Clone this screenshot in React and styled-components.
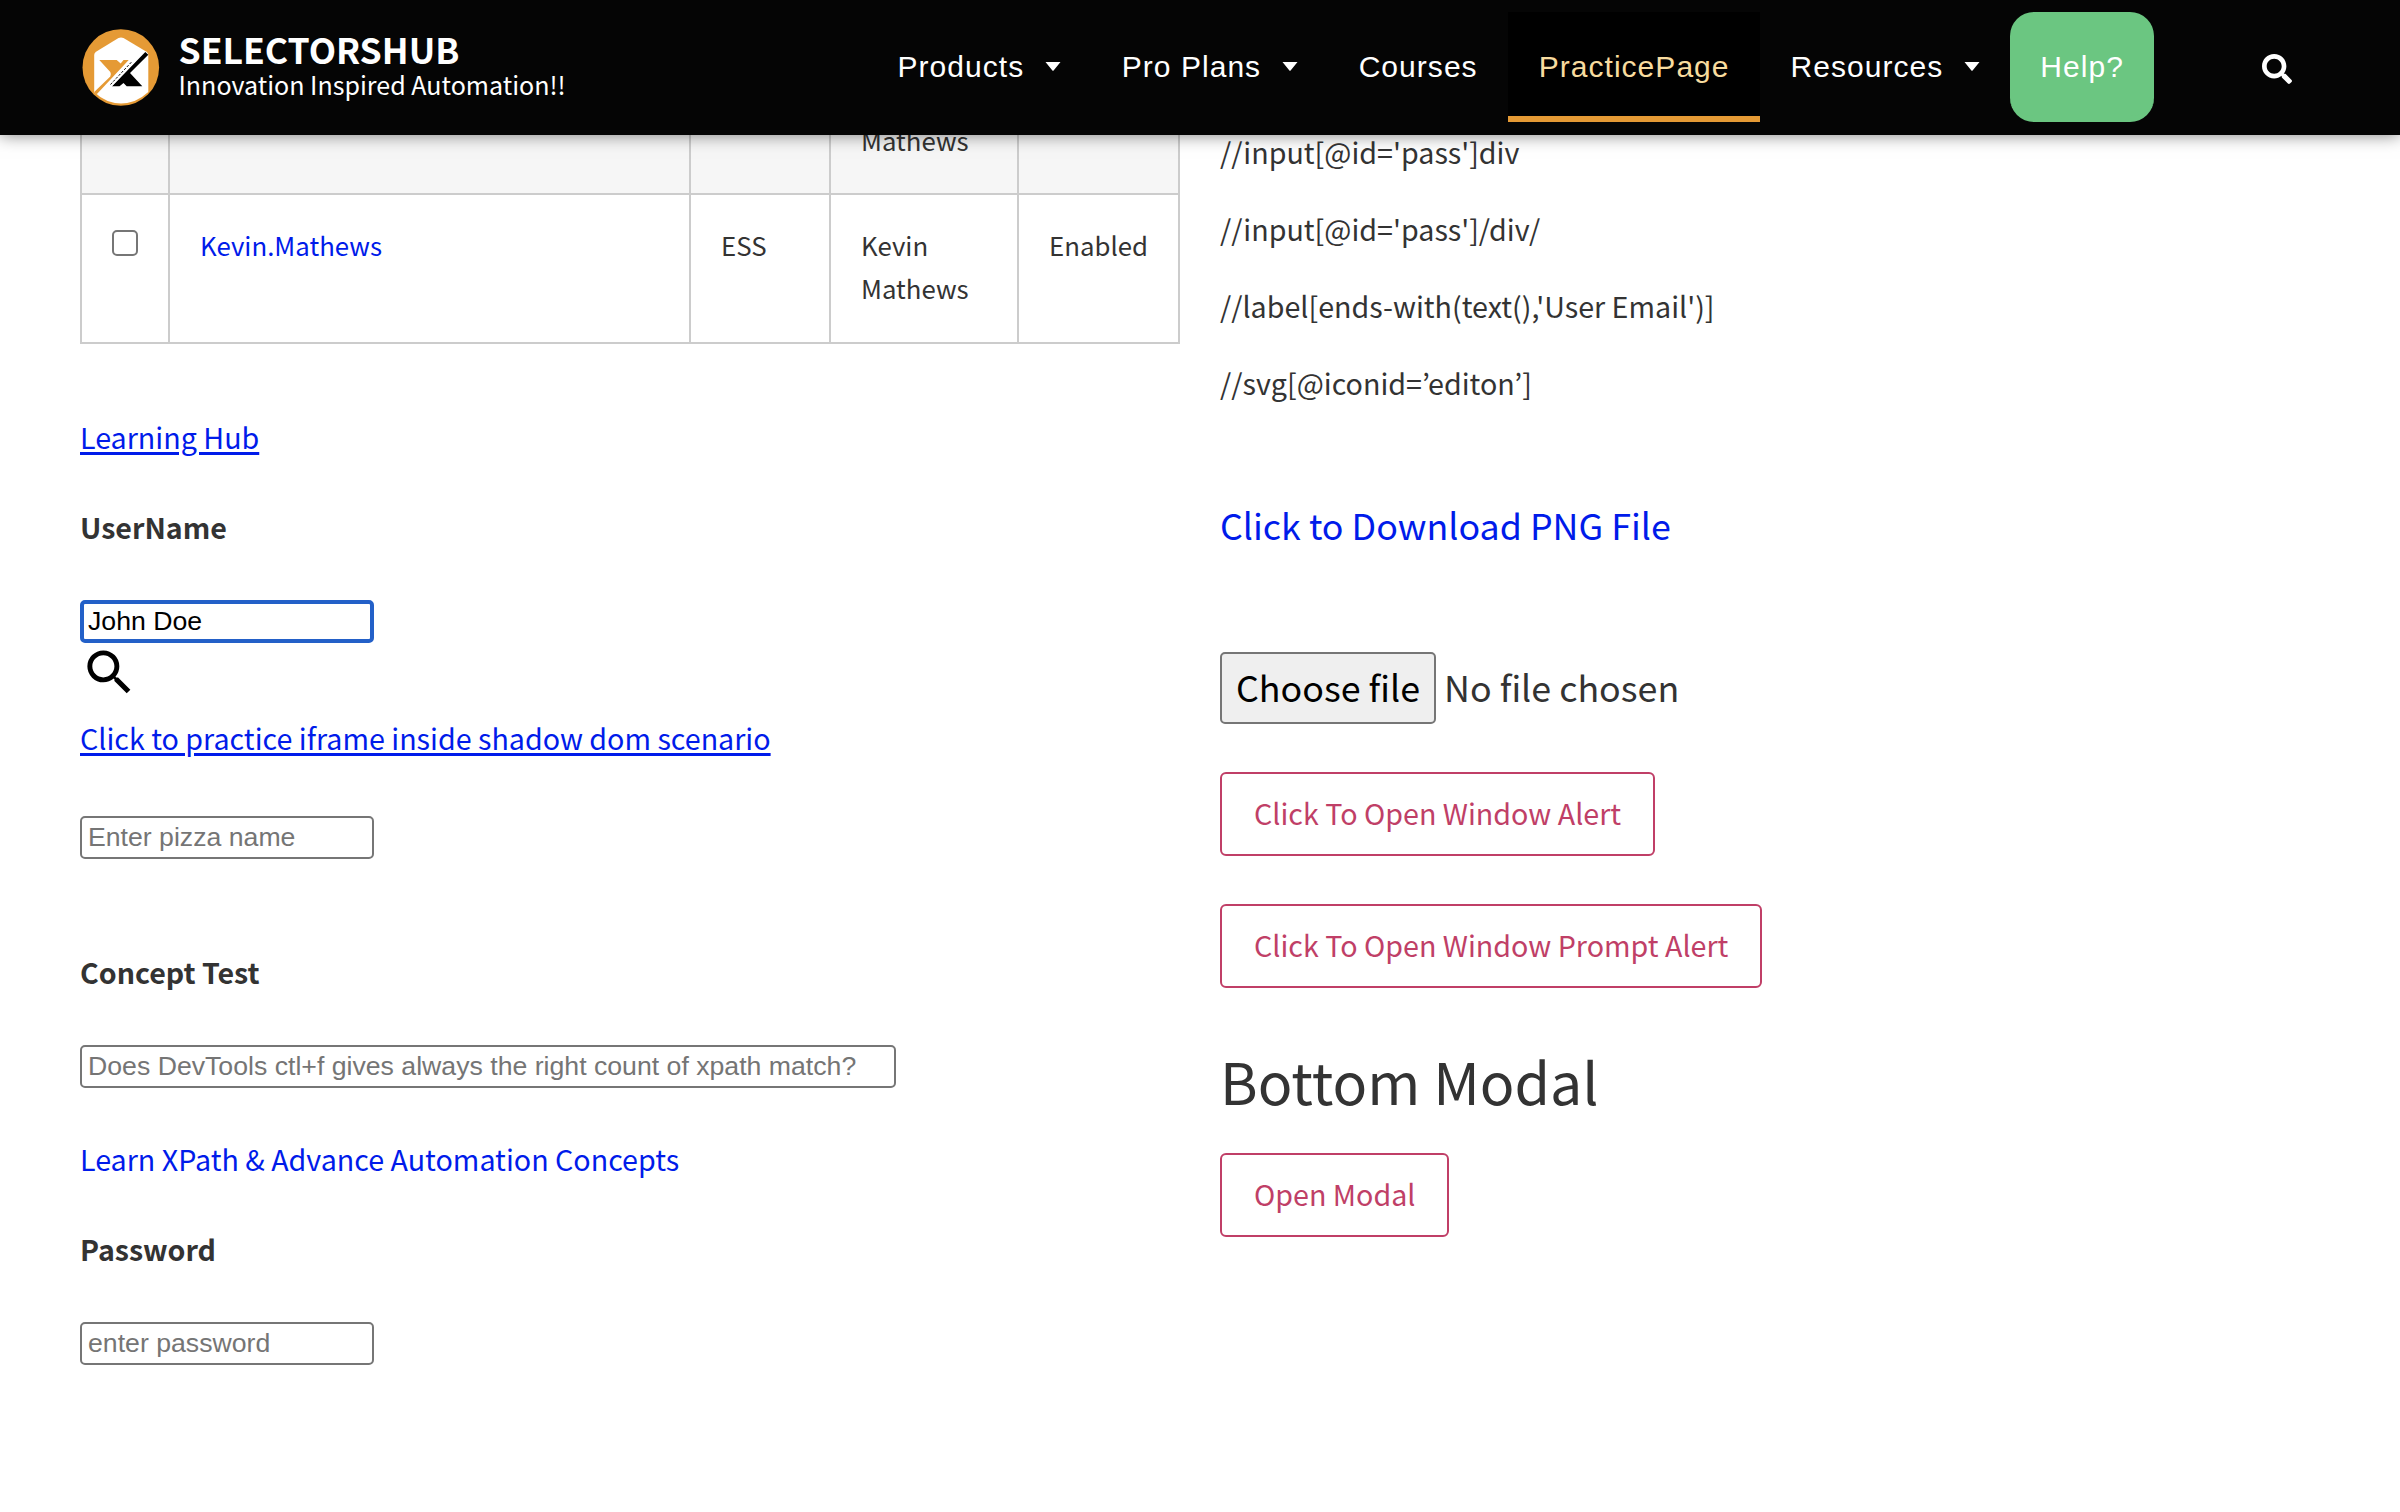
import React from "react";
import styled, { createGlobalStyle } from "styled-components";

const GlobalStyle = createGlobalStyle`
  *, *::before, *::after { box-sizing: border-box; }
  body {
    margin: 0;
    background: #fff;
    color: #333;
    font-family: "Noto Sans CJK KR", "Noto Sans", sans-serif;
  }
`;

const Page = styled.div`
  width: 2400px;
  height: 1512px;
  overflow: hidden;
`;

const Header = styled.header`
  position: relative;
  z-index: 2;
  display: flex;
  align-items: center;
  height: 135px;
  padding: 0 108px 0 82px;
  background: #050505;
  box-shadow: 0 0 16px rgba(0, 0, 0, 0.5);
`;

const Brand = styled.a`
  display: flex;
  align-items: center;
  gap: 18.5px;
  width: 785px;
  margin-bottom: 3px;
  color: #fff;
`;

const Logo = styled.svg`
  width: 78px;
  height: 78px;
  margin-top: 1px;
  flex: none;
`;

const BrandName = styled.div`
  font-size: 35.5px;
  font-weight: 700;
  line-height: 36px;
  white-space: nowrap;
`;

const Tagline = styled.div`
  font-size: 25.05px;
  line-height: 34px;
  white-space: nowrap;
`;

const Nav = styled.nav`
  display: flex;
  align-items: stretch;
  height: 110px;
  margin-bottom: 1px;
`;

const NavItem = styled.a`
  display: flex;
  align-items: center;
  gap: 20.5px;
  padding: 6px 30.5px 0;
  border-bottom: 6px solid ${(p) => (p.$active ? "#e59a35" : "transparent")};
  background: ${(p) => (p.$active ? "#000" : "transparent")};
  color: ${(p) => (p.$active ? "#f8dc9f" : "#fff")};
  font: 30px/98px "Liberation Sans", Arial, sans-serif;
  letter-spacing: 1.04px;
  white-space: nowrap;
`;

const HelpItem = styled(NavItem)`
  padding-left: 30px;
  padding-right: 30px;
  border-radius: 24px;
  border-color: #6bc681;
  background: #6bc681;
`;

const Caret = styled.svg`
  width: 16px;
  height: 9px;
  margin-top: -2px;
  fill: #fff;
`;

const SearchButton = styled.span`
  display: flex;
  margin: 2px 0 0 auto;
`;

const Main = styled.main`
  display: grid;
  grid-template-columns: 1100px 1fr;
  column-gap: 40px;
  padding-left: 80px;
`;

const Column = styled.section`
  display: flex;
  flex-direction: column;
  align-items: flex-start;
`;

const Table = styled.div`
  display: grid;
  grid-template-columns: 88px 521px 140px 188px 161px;
  grid-template-rows: 60px 149px;
  border-left: 2px solid #ccc;
  font-size: 25.8px;
  line-height: 43px;
`;

const Cell = styled.div`
  display: flex;
  align-items: ${(p) => (p.$clipped ? "flex-end" : "flex-start")};
  padding: ${(p) => (p.$clipped ? "0 30px 32px" : "28px 30px")};
  border-right: 2px solid #ccc;
  border-bottom: 2px solid #ccc;
  background: ${(p) => (p.$clipped ? "#f6f6f6" : "#fff")};
`;

const CheckBox = styled.input`
  appearance: none;
  width: 26px;
  height: 26px;
  margin: 7px 0 0;
  border: 2px solid #767676;
  border-radius: 5px;
  background: #fff;
`;

const TextLink = styled.a`
  margin-top: ${(p) => p.$gap || 0}px;
  color: #001bea;
  font-size: ${(p) => p.$size || 28.66}px;
  line-height: ${(p) => p.$line || 48}px;
  text-decoration: ${(p) => (p.$underlined ? "underline" : "none")};
  text-decoration-thickness: 2.5px;
  text-underline-offset: 3px;
  white-space: nowrap;
`;

const Label = styled.label`
  margin-top: ${(p) => p.$gap}px;
  font-size: 28.6px;
  font-weight: 700;
  line-height: 48px;
`;

const Field = styled.input`
  width: ${(p) => p.$width || 294}px;
  height: 43px;
  margin: ${(p) => p.$gap}px 0 0;
  padding: ${(p) => (p.$focused ? "0 4px" : "0 6px")};
  border: ${(p) => (p.$focused ? "4px solid #2360c8" : "2px solid #767676")};
  border-radius: 5px;
  outline: none;
  background: #fff;
  color: #000;
  font: 26.67px "Liberation Sans", Arial, sans-serif;
  &::placeholder { color: #757575; opacity: 1; }
`;

const LensIcon = styled.svg`
  width: 59px;
  height: 59px;
`;

const XPathList = styled.div`
  display: flex;
  flex-direction: column;
  gap: 29px;
  margin-top: -7px;
  font-size: 28.66px;
  line-height: 48px;
  white-space: nowrap;
`;

const FileRow = styled.div`
  display: flex;
  align-items: center;
  gap: 8px;
  margin-top: 100px;
  font-size: 35.8px;
  line-height: 64px;
  white-space: nowrap;
`;

const FileButton = styled.button`
  height: 72px;
  padding: 0 14px 4px;
  border: 2px solid #767676;
  border-radius: 5px;
  background: #efefef;
  color: #000;
  font: inherit;
`;

const FileStatus = styled.span`
  padding-bottom: 4px;
`;

const OutlineButton = styled.button`
  height: 84px;
  margin-top: ${(p) => p.$gap}px;
  padding: 0 32px 2px;
  border: 2px solid #c03f67;
  border-radius: 6px;
  background: #fff;
  color: #c03f67;
  font: 28.66px/78px "Noto Sans CJK KR", "Noto Sans", sans-serif;
  white-space: nowrap;
`;

const Heading = styled.h2`
  margin: 52px 0 0;
  font-size: 57.35px;
  font-weight: 400;
  line-height: 80px;
  white-space: nowrap;
`;

const Arrow = () => (
  <Caret viewBox="0 0 16 9">
    <path d="M0.5 0h15L8.8 8.2a1 1 0 0 1-1.6 0z" />
  </Caret>
);

const NAV = [
  { label: "Products", menu: true },
  { label: "Pro Plans", menu: true },
  { label: "Courses" },
  { label: "PracticePage", active: true },
  { label: "Resources", menu: true },
];

const XPATHS = [
  "//input[@id='pass']div",
  "//input[@id='pass']/div/",
  "//label[ends-with(text(),'User Email')]",
  "//svg[@iconid=’editon’]",
];

export default function App() {
  return (
    <Page>
      <GlobalStyle />
      <Header>
        <Brand>
          <Logo viewBox="0 0 78 78">
            <circle cx="38.8" cy="39.5" r="38.3" fill="#e59a35" />
            <path
              d="M12.2 27Q12.2 25 14 23.8L36.5 10Q39 8.800 41.500 10L64.500 23.800Q66.300 25 66.300 27V64Q54 75.400 39 75.400Q24 75.400 12.200 64Z"
              fill="#fff"
            />
            <path d="M17.300 32H34.700L38.700 35.500L41.500 32H46.700L14.700 66.300L12.200 64L28.300 48.500Q29.500 46 28.300 44Z" fill="#e59a35" />
            <path d="M30 58.300L63.300 24L66.300 26.700L48 45L60.300 58.300H44.700L41.500 55L37.500 58.300Z" fill="#000" />
            <path d="M26 59L52 32" stroke="#fff" strokeWidth="4.500" />
            <path d="M28.500 56.500L50 33.500" stroke="#111" strokeWidth="1" strokeDasharray="2.500 1.500" />
          </Logo>
          <div>
            <BrandName>SELECTORSHUB</BrandName>
            <Tagline>Innovation Inspired Automation!!</Tagline>
          </div>
        </Brand>
        <Nav>
          {NAV.map((item) => (
            <NavItem key={item.label} $active={item.active}>
              {item.label}
              {item.menu && <Arrow />}
            </NavItem>
          ))}
          <HelpItem>Help?</HelpItem>
        </Nav>
        <SearchButton>
          <svg width="30" height="30" viewBox="0 0 512 512" fill="#fff">
            <path d="M505 442.700L405.300 343c-4.500-4.500-10.600-7-17-7H372c27.600-35.300 44-79.700 44-128C416 93.100 322.900 0 208 0S0 93.100 0 208s93.100 208 208 208c48.300 0 92.700-16.400 128-44v16.300c0 6.400 2.500 12.500 7 17l99.700 99.700c9.400 9.400 24.600 9.400 33.900 0l28.300-28.300c9.400-9.400 9.400-24.600.1-34zM208 336c-70.700 0-128-57.200-128-128 0-70.700 57.200-128 128-128 70.700 0 128 57.200 128 128 0 70.700-57.200 128-128 128z" />
          </svg>
        </SearchButton>
      </Header>
      <Main>
        <Column>
          <Table>
            <Cell $clipped />
            <Cell $clipped />
            <Cell $clipped />
            <Cell $clipped>Mathews</Cell>
            <Cell $clipped />
            <Cell><CheckBox type="checkbox" /></Cell>
            <Cell><TextLink $size={25.8} $line={43}>Kevin.Mathews</TextLink></Cell>
            <Cell>ESS</Cell>
            <Cell>Kevin<br />Mathews</Cell>
            <Cell>Enabled</Cell>
          </Table>
          <TextLink $gap={69} $underlined>Learning Hub</TextLink>
          <Label $gap={42}>UserName</Label>
          <Field $gap={49} $focused defaultValue="John Doe" />
          <LensIcon viewBox="0 0 24 24">
            <path d="M15.500 14h-.79l-.28-.27A6.471 6.471 0 0 0 16 9.500 6.500 6.500 0 1 0 9.500 16c1.610 0 3.090-.59 4.230-1.570l.27.28v.79l5 4.990L20.490 19l-4.990-5zm-6 0C7.010 14 5 11.990 5 9.500S7.010 5 9.500 5 14 7.010 14 9.500 11.990 14 9.500 14z" />
          </LensIcon>
          <TextLink $gap={12} $underlined>Click to practice iframe inside shadow dom scenario</TextLink>
          <Field $gap={54} placeholder="Enter pizza name" />
          <Label $gap={89}>Concept Test</Label>
          <Field
            $gap={49}
            $width={816}
            placeholder="Does DevTools ctl+f gives always the right count of xpath match?"
          />
          <TextLink $gap={47}>Learn XPath &amp; Advance Automation Concepts</TextLink>
          <Label $gap={42}>Password</Label>
          <Field $gap={49} placeholder="enter password" />
        </Column>
        <Column>
          <XPathList>
            {XPATHS.map((x) => (
              <div key={x}>{x}</div>
            ))}
          </XPathList>
          <TextLink $gap={89} $size={35.8} $line={56}>Click to Download PNG File</TextLink>
          <FileRow>
            <FileButton>Choose file</FileButton>
            <FileStatus>No file chosen</FileStatus>
          </FileRow>
          <OutlineButton $gap={48}>Click To Open Window Alert</OutlineButton>
          <OutlineButton $gap={48}>Click To Open Window Prompt Alert</OutlineButton>
          <Heading>Bottom Modal</Heading>
          <OutlineButton $gap={33}>Open Modal</OutlineButton>
        </Column>
      </Main>
    </Page>
  );
}
